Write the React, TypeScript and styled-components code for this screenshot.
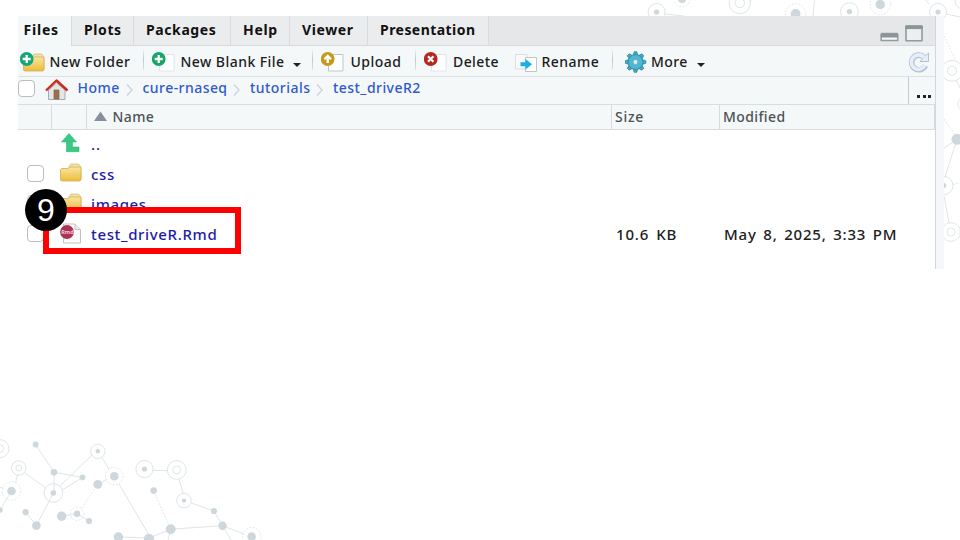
import React from "react";
import styled, { createGlobalStyle } from "styled-components";

const Global = createGlobalStyle`
  *{box-sizing:border-box}
  body{margin:0;background:#fff;overflow:hidden;font-family:"Noto Sans","Open Sans",sans-serif}
`;
const Slide = styled.main`position:relative;width:960px;height:540px;overflow:hidden;padding:16px 0 0 18px;`;
const Backdrop = styled.svg`position:absolute;left:0;top:0;`;
const Panel = styled.section`position:relative;display:flex;width:926px;height:253px;background:#f5f7fa;`;
const Pane = styled.div`width:918px;background:#fff;border-right:1px solid #d3d7da;display:flex;flex-direction:column;`;
const Label = styled.span<{ $ls?: number; $ws?: number; $w?: number; $bold?: boolean; $size?: number }>`
  font-size:${p => p.$size ?? 14}px;line-height:20px;white-space:pre;flex:none;
  letter-spacing:${p => p.$ls ?? 0}px;
  word-spacing:${p => p.$ws ?? 0}px;
  font-weight:${p => (p.$bold ? 700 : 500)};
  ${p => (p.$w ? `width:${p.$w}px;` : "")}
`;
const Tabs = styled.nav`display:flex;height:30px;background:#e6e7e9;`;
const Tab = styled.div<{ $w: number; $active?: boolean }>`
  width:${p => p.$w}px;height:30px;padding:2px 0 0 ${p => (p.$active ? 5.5 : 12)}px;color:#111;
  background:${p => (p.$active ? "#f4f8f9" : "#ebecee")};
  border-right:1px solid #d9dcdf;
  border-bottom:${p => (p.$active ? "0" : "1px solid #d7dbde")};
`;
const TabFill = styled.div`flex:1;border-bottom:1px solid #d7dbde;display:flex;justify-content:flex-end;padding:8px 11px 0 0;`;
const Toolbar = styled.div`display:flex;align-items:center;height:31px;background:#f4f8f9;border-bottom:1px solid #dce1e4;color:#1c1c1c;padding:2px 0 0 2px;`;
const Action = styled.div<{ $w: number; $icon: number }>`
  width:${p => p.$w}px;display:flex;align-items:center;flex:none;
  & > svg{flex:none;margin-right:${p => p.$icon - 26}px}
  & > svg + span{position:static}
`;
const Divider = styled.i`width:1px;height:20px;margin:-4px 8px 0 0;background:linear-gradient(#e8ecee,#c2c8cb,#e0e4e6);flex:none;`;
const Caret = styled.i`border:4px solid transparent;border-top-color:#222;border-bottom:0;margin-top:5px;`;
const Path = styled.div`display:flex;height:28px;background:#f4f8f9;border-bottom:1px solid #d8dde0;color:#3059cf;`;
const PathParts = styled.div`display:flex;flex:1;align-items:flex-start;padding-top:1px;`;
const Crumb = styled.div<{ $w: number }>`width:${p => p.$w}px;display:flex;align-items:center;justify-content:space-between;`;
const Spacer = styled.span`display:flex;padding:3px 14px 0 0;margin-right:-5px;`;
const Check = styled.span`width:17px;height:17px;border:1.5px solid #b9bdc0;border-radius:4px;background:#fff;flex:none;`;
const PathHome = styled.div`display:flex;width:59.5px;height:26px;padding-top:2px;gap:9.5px;
  & > svg{margin-top:-1px}`;
const More = styled.div`width:27px;border-left:1px solid #c5cbce;display:flex;align-items:flex-end;gap:2.5px;padding:0 0 6px 8px;
  & > i{width:3px;height:3px;background:#222}`;
const Head = styled.div`display:grid;grid-template-columns:34px 35px 525px 108px 1fr;height:25px;background:#f4f8f9;border-bottom:1px solid #d9dddf;color:#4c5256;`;
const HeadCell = styled.div<{ $pad?: number }>`border-right:1px solid #d7dbdf;padding:2px 0 0 ${p => p.$pad ?? 3}px;display:flex;gap:5.5px;`;
const List = styled.div`display:flex;flex-direction:column;margin-top:-1px;`;
const Row = styled.div`display:grid;grid-template-columns:8.5px 33.5px 31px 525px 108px 1fr;height:29.9px;align-items:center;color:#202020;
  & > svg,& > span:nth-child(2){margin-top:-1px}`;
const Name = styled.div`color:#1c1ca8;`;
const Highlight = styled.div`position:absolute;left:43px;top:207.4px;width:198px;height:46.6px;border:6px solid #fe0000;`;
const Step = styled.div`position:absolute;left:25px;top:189px;width:42px;height:42px;border-radius:50%;background:#000;color:#fff;
  font:32px/42px "Liberation Sans",sans-serif;text-align:center;`;

type Dot = [number, number, number];
const dots: Dot[] = [
  [35.6,444.5,2.9],[54,472.3,3.2],[82.5,477.4,2.8],[53.4,493,2.8],[97.8,451.3,2.2],[11.5,491,4.3],[0,510,2.8],[25.6,512.2,3.1],[36.4,525.6,4.3],
  [61.6,516.2,4.7],[77,513.8,3.3],[89,521,3.1],[97.8,484.4,4.4],[114.3,476.2,4.3],[118.4,537,4.7],[144.5,469,2.6],[153.6,490.6,3.3],[184,500.6,2.2],
  [214,511,3.1],[222.5,525.7,4.2],[170.7,529.2,4.9],[149,539,5.2],[251.6,536.6,4.3],
  [656.6,12,2.6],[682,-1,4],[795.6,14,4.9],[849.4,11.6,2.7],[880.3,4.5,4.7],[938,12,2.6],[957,139.3,5.5],[944,185.5,2.4],
];
const rings: Dot[] = [
  [0,448.7,9],[0,448.7,3.7],[18.8,468,7.2],[18.8,468,3],[53.4,493,9.3],[97.8,451.3,7.2],[144.5,469,8.6],[176.7,470,9.4],[176.7,470,3.9],[184,500.6,7.3],
  [656.6,12,8.5],[739.8,3,10.7],[739.8,3,4.7],[849.4,11.6,8.9],[938,12,8.5],[952,70.8,10.5],[952,70.8,4.6],[944,185.5,9],[951,232,9.3],[951,232,4],[965,104,7],[963,1,8],
];
const dashed: Dot[] = [[11.5,491,9.3],[77,513.8,6.7],[114.3,476.2,8.8],[251.6,536.6,9.2],[682,-1,8],[795.6,14,10.2],[880.3,4.5,10.2]];

const Network = () => (
  <Backdrop width="960" height="540" viewBox="0 0 960 540" fill="none" stroke="#dfe6e8" strokeWidth="1">
    <path d="M35.6 444.5 54 472.3V493M54 472.3 82.5 477.4 62 490M60 486 92 455M102 457.5 109 469M25 473 46 488M17.5 475 15.5 483M0 487.5 3 488M11.5 491 0 510M53.4 493 36.4 525.6 25.6 512.2M61.6 516.2 77 513.8 89 521M97.8 484.4 106 480M119 484 149 535M153 470.5H167.5M179 479 183 493M191 503 214 511 222.5 525.7 170.7 529.2 149 538M118.4 537 149 538M222.5 525.7 244 534M222.5 525.7 231 540M170.7 529.2 168 540"/>
    <path d="M665 14 684 16M750 1 756-3M814.5 0 813 16M929 4 924-2M946 14 960 17M956 80 960 88M957 139.3 944 148M957 139.3 945 177M944 196 949 223"/>
    <path strokeDasharray="1.7 1.7" d="M82 508 95 488M155 494 170.7 529.2M944 36 956 61M944 119 957 138M953 184.5 960 183"/>
    {rings.map(([x, y, r], i) => <circle key={i} cx={x} cy={y} r={r} />)}
    {dashed.map(([x, y, r], i) => <circle key={i} cx={x} cy={y} r={r} strokeDasharray="1.7 1.7" />)}
    <g fill="#ced7db" stroke="none">{dots.map(([x, y, r], i) => <circle key={i} cx={x} cy={y} r={r} />)}</g>
  </Backdrop>
);

const Badge = ({ fill, sign }: { fill: string; sign: string }) => (
  <g><circle cx="6.7" cy="7" r="6.9" fill={fill} /><path d={sign} stroke="#fff" strokeWidth="2.3" fill="none" /></g>
);
const PLUS = "M6.7 3V11M2.7 7H10.7", UP = "M6.7 11V4.5M3.4 7.3 6.7 4 10 7.3", CROSS = "M4 4.3 9.4 9.7M9.4 4.3 4 9.7";

const FolderShape = () => (
  <g>
    <path d="M9 3.5 11 1H18.5L21 4V16H9Z" fill="#efe2ae" stroke="#d3bc75" strokeWidth=".8" />
    <path d="M.5 6.5 1.5 5.5H8L10 4H20L21 5V17L20 18H1.5L.5 17Z" fill="url(#gold)" stroke="#d4ae50" strokeWidth=".8" />
  </g>
);
const Gold = () => <linearGradient id="gold" x2="0" y2="1"><stop stopColor="#f9e6a0" /><stop offset="1" stopColor="#edbb3c" /></linearGradient>;
const Folder = () => <svg width="23" height="20"><defs><Gold /></defs><FolderShape /></svg>;
const NewFolderIcon = () => <svg width="26" height="21"><defs><Gold /></defs><g transform="translate(3 1)"><FolderShape /></g><Badge fill="#17a67a" sign={PLUS} /></svg>;
const SheetIcon = ({ fill, sign, edge = "#dfe4e8" }: { fill: string; sign: string; edge?: string }) => (
  <svg width="26" height="21"><path d="M7.5 2.5H22V19H7.5Z" fill="#fff" stroke={edge} /><Badge fill={fill} sign={sign} /></svg>
);
const RenameIcon = () => (
  <svg width="26" height="21"><path d="M.5 2.5H12V17H.5Z" fill="#f9fafb" stroke="#d9dfe3" /><path d="M10.5 5.5H21.5V19.5H10.5Z" fill="#fff" stroke="#bcc5ca" />
  <path d="M5.5 10.3H10.5V7L17 12.3 10.5 17.5V14.3H5.5Z" fill="#19aee8" /></svg>
);
const Gear = () => (
  <svg width="26" height="22" viewBox="0 0 26 22">
    <g fill="#3fabc6" stroke="#36859d" strokeWidth=".8">
      {[0, 45, 90, 135, 180, 225, 270, 315].map(a => <path key={a} d="M8 5 9.2.7H11.8L13 5Z" transform={`rotate(${a} 10.5 11)`} />)}
      <circle cx="10.5" cy="11" r="7.5" />
    </g>
    <circle cx="10.5" cy="11" r="6.8" fill="#4cb8d2" /><circle cx="10.5" cy="11" r="2.6" fill="#d5ebf1" stroke="#6fa9b8" />
  </svg>
);
const House = () => (
  <svg width="24" height="22"><path d="M3.5 11 11.5 4 20 11V20.5H3.5Z" fill="#e3e5e7" stroke="#a4aaaf" /><path d="M9 11H14V20H9Z" fill="#9a7048" stroke="#7e6550" strokeWidth=".7" />
  <path d="M1 11.5 11.5 1.5 22.5 11.5" fill="none" stroke="#c92a1b" strokeWidth="2.4" strokeLinejoin="round" /></svg>
);
const Chevron = () => <svg width="8" height="14"><path d="M1 1.5 6 7 1 12.5" fill="none" stroke="#cbd2d9" strokeWidth="1.3" /></svg>;
const WindowIcons = () => (
  <svg width="44" height="20"><path d="M1.2 11H17.7V16.5H1.2Z" fill="#f5f7f7" stroke="#939b9f" strokeWidth="1.5" /><path d="M1.2 9.3H17.7V13H1.2Z" fill="#8b9498" stroke="#8b9498" strokeLinejoin="round" />
  <path d="M26 2.5H42V16.8H26Z" fill="#eceff0" stroke="#929a9e" strokeWidth="1.6" strokeLinejoin="round" /><path d="M25.8 1.8H42.2V4.6H25.8Z" fill="#8b9498" stroke="#8b9498" strokeLinejoin="round" /></svg>
);
const Refresh = () => (
  <svg width="23" height="23" viewBox="0 0 23 23" fill="none"><path d="M17.5 14.6A7.3 7.3 0 1 1 16 6.2" stroke="#b8c0d1" strokeWidth="5.6" /><path d="M20.5 2V10.5H12L14.8 7.6 17.6 4.6Z" fill="#e6eefb" stroke="#b8c0d1" />
  <path d="M17 14.3A7.2 7.2 0 1 1 16 6.4" stroke="#e6eefb" strokeWidth="3.6" /></svg>
);
const UpArrow = () => <svg width="22" height="20"><path d="M9 .5 16.5 9H12.5V14H19V18.7H6.5V9H1.5Z" fill="#39c985" stroke="#2fb977" strokeWidth=".6" /></svg>;
const RmdIcon = () => (
  <svg width="23" height="21"><path d="M3.5 1H15L20.5 6.5V20H3.5Z" fill="#fafafa" stroke="#bfc2c5" /><path d="M15 1V6.5H20.5" fill="#ececec" stroke="#bfc2c5" />
  <circle cx="7" cy="9" r="6.9" fill="#a93456" /><text x="1.2" y="10.7" fontSize="5.5" fontWeight="700" fill="#f1c8d3">Rmd</text></svg>
);
const GearSlot = styled.span`display:flex;width:30px;padding-left:4px;flex:none;`;

const tabs: [string, number, number][] = [["Files",54,.8],["Plots",62,.6],["Packages",97,.6],["Help",59,.7],["Viewer",78,.6],["Presentation",121,.45]];

export default function App() {
  return (
    <Slide>
      <Global />
      <Network />
      <Panel>
        <Pane>
          <Tabs>
            {tabs.map(([t, w, ls], i) => <Tab key={t} $w={w} $active={i === 0}><Label $bold $ls={ls}>{t}</Label></Tab>)}
            <TabFill><WindowIcons /></TabFill>
          </Tabs>
          <Toolbar>
            <Action $w={123} $icon={29.5}><NewFolderIcon /><Label $ls={.5}>New Folder</Label></Action>
            <Divider />
            <Action $w={160} $icon={28.5}><SheetIcon fill="#17a568" sign={PLUS} /><Label $w={112.5} $ls={.45}>New Blank File</Label><Caret /></Action>
            <Divider />
            <Action $w={94} $icon={29.5}><SheetIcon fill="#c39b1c" sign={UP} edge="#bdc5cb" /><Label $ls={.5}>Upload</Label></Action>
            <Divider />
            <Action $w={91} $icon={29}><SheetIcon fill="#b92620" sign={CROSS} /><Label $ls={.4}>Delete</Label></Action>
            <Action $w={97} $icon={26.5}><RenameIcon /><Label $ls={.45}>Rename</Label></Action>
            <Divider />
            <Action $w={287} $icon={26}><GearSlot><Gear /></GearSlot><Label $w={45.5} $ls={.4}>More</Label><Caret /></Action>
            <Refresh />
          </Toolbar>
          <Path>
            <PathParts>
              <PathHome><Check /><House /></PathHome>
              <Crumb $w={65}><Label $ls={.5}>Home</Label><Spacer><Chevron /></Spacer></Crumb>
              <Crumb $w={107.5}><Label $ls={.45}>cure-rnaseq</Label><Spacer><Chevron /></Spacer></Crumb>
              <Crumb $w={83}><Label $ls={.45}>tutorials</Label><Spacer><Chevron /></Spacer></Crumb>
              <Label $ls={.45}>test_driveR2</Label>
            </PathParts>
            <More><i /><i /><i /></More>
          </Path>
          <Head>
            <HeadCell /><HeadCell />
            <HeadCell $pad={7}><svg width="13" height="18"><path d="M0 14 6.5 4.5 13 14Z" fill="#858f9d" /></svg><Label $ls={.4}>Name</Label></HeadCell>
            <HeadCell><Label $ls={.7}>Size</Label></HeadCell><HeadCell><Label $ls={.4}>Modified</Label></HeadCell>
          </Head>
          <List>
            <Row><i /><i /><UpArrow /><Name><Label $size={15} $ls={1}>..</Label></Name></Row>
            <Row><i /><Check /><Folder /><Name><Label $size={15} $ls={.7}>css</Label></Name></Row>
            <Row><i /><Check /><Folder /><Name><Label $size={15} $ls={.6}>images</Label></Name></Row>
            <Row><i /><Check /><RmdIcon /><Name><Label $size={15} $ls={.65}>test_driveR.Rmd</Label></Name><Label $size={15} $ls={.8} $ws={2.5}>10.6 KB</Label><Label $size={15} $ls={.8} $ws={1.9}>May 8, 2025, 3:33 PM</Label></Row>
          </List>
        </Pane>
      </Panel>
      <Highlight />
      <Step>9</Step>
    </Slide>
  );
}
